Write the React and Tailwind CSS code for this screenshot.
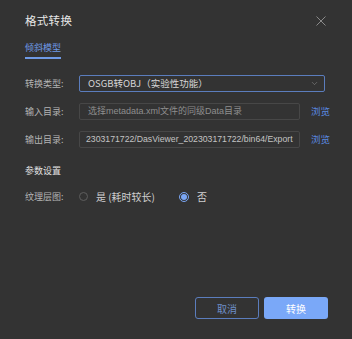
import { ChevronDown } from 'lucide-react';

const latin = { fontFamily: '"Liberation Sans", "Noto Sans CJK SC", sans-serif' };

function Row({ label, children, browse }) {
  return (
    <div className="flex items-center h-[17px]">
      <span className="w-[54px] shrink-0 text-[9px] text-[#b4b4b4] whitespace-nowrap">{label}</span>
      {children}
      {browse && <span className="ml-[11px] shrink-0 whitespace-nowrap text-[9.5px] text-[#5a8ae0]">浏览</span>}
    </div>
  );
}

function App() {
  return (
    <div
      className="w-[352px] h-[339px] bg-[#333333] text-[#d8d8d8] flex flex-col pl-[25px] pr-[24px] overflow-hidden"
      style={{ fontFamily: '"Noto Sans CJK SC", "Open Sans", sans-serif' }}
    >
      {/* Header */}
      <div className="flex items-center justify-between h-[40px] pt-[1px]">
        <h1 className="text-[11.5px] text-[#e6e6e6] tracking-[0.3px]">格式转换</h1>
        <svg width="10" height="10" viewBox="0 0 10 10" className="mr-[2px]">
          <path d="M0.5 0.5 L9.5 9.5 M9.5 0.5 L0.5 9.5" stroke="#8a8a8a" strokeWidth="1" fill="none" />
        </svg>
      </div>

      {/* Tab */}
      <div className="flex">
        <div className="text-[9px] text-[#6f9ae6] pt-[2px] pb-[3px] border-b-2 border-[#6f9ae6] leading-[12px]">倾斜模型</div>
      </div>

      <div className="flex flex-col gap-[11px] mt-[16px]">
        <Row label="转换类型:">
          <div className="w-[246px] shrink-0 h-[17px] border border-[#5b7dbd] rounded-[2px] flex items-center justify-between pl-[8px] pr-[5px]">
            <span className="text-[9.5px] text-[#d6d6d6] whitespace-nowrap">OSGB转OBJ（实验性功能）</span>
            <ChevronDown size={9} strokeWidth={1.3} className="text-[#9a9a9a]" />
          </div>
        </Row>
        <Row label="输入目录:" browse>
          <div className="w-[221px] shrink-0 h-[17px] border border-[#474747] rounded-[2px] flex items-center pl-[8px] overflow-hidden">
            <span className="text-[9px] text-[#8e8e8e] whitespace-nowrap" style={latin}>选择metadata.xml文件的同级Data目录</span>
          </div>
        </Row>
        <Row label="输出目录:" browse>
          <div className="w-[221px] shrink-0 h-[17px] border border-[#474747] rounded-[2px] flex items-center pl-[6px] overflow-hidden">
            <span className="text-[8.7px] text-[#c4c4c4] whitespace-nowrap" style={latin}>2303171722/DasViewer_202303171722/bin64/Export</span>
          </div>
        </Row>
      </div>

      <div className="mt-[16px] text-[9px] text-[#e0e0e0]">参数设置</div>

      <div className="flex items-center mt-[12px] h-[14px]">
        <span className="w-[54px] shrink-0 text-[9px] text-[#b4b4b4]">纹理层图:</span>
        <span className="w-[9px] h-[9px] rounded-full border border-[#5e5e5e]" />
        <span className="ml-[8px] text-[10px] text-[#d0d0d0]">是 (耗时较长)</span>
        <span className="ml-[24px] w-[10px] h-[10px] rounded-full border border-[#7aa6f4] flex items-center justify-center">
          <span className="w-[6px] h-[6px] rounded-full bg-[#7aa6f4]" />
        </span>
        <span className="ml-[8px] text-[10px] text-[#d0d0d0]">否</span>
      </div>

      <div className="flex-1" />

      <div className="flex justify-end gap-[5px] mb-[20px]">
        <button className="w-[64px] h-[22px] border border-[#5b7dbd] rounded-[3px] text-[10px] text-[#6e8fc8]">取消</button>
        <button className="w-[64px] h-[22px] bg-[#7aa8f8] rounded-[3px] text-[10px] text-white">转换</button>
      </div>
    </div>
  );
}

export default App;
